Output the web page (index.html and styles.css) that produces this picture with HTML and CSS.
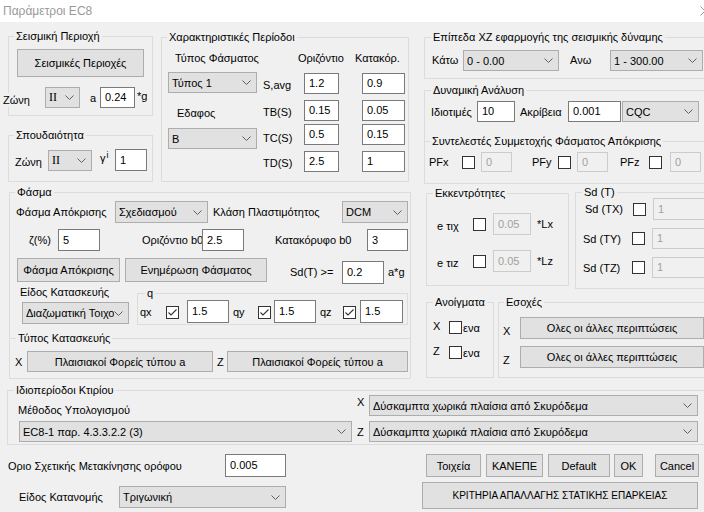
FILE: index.html
```html
<!DOCTYPE html>
<html lang="el">
<head>
<meta charset="utf-8">
<title>Παράμετροι EC8</title>
<link rel="stylesheet" href="styles.css">
</head>
<body>
<div class="win">
  <div class="titlebar">
    <span>Παράμετροι EC8</span>
    <svg class="close" width="10" height="10" viewBox="0 0 10 10"><path d="M0.5 0.5L9.5 9.5M9.5 0.5L0.5 9.5" stroke="#9a9a9a" stroke-width="1" fill="none"/></svg>
  </div>
  <div class="client">
    <div class="top">
      <div class="colL">
        <div class="rowA">
          <div class="stack">
            <div class="grp g-seis">
              <span class="cap">Σεισμική Περιοχή</span>
              <div class="btn seis-btn">Σεισμικές Περιοχές</div>
              <div class="row seis-row">
                <span class="lbl zona-a">Ζώνη</span>
                <div class="cmb zone-cmb serif"><span class="t">II</span><svg width="9" height="5" viewBox="0 0 9 5"><path d="M0.5 0.5L4.5 4.5L8.5 0.5" fill="none" stroke="#606060"/></svg></div>
                <span class="lbl a-lbl">a</span>
                <div class="txt ag-txt">0.24</div>
                <span class="lbl g-lbl">*g</span>
              </div>
            </div>
            <div class="grp g-imp">
              <span class="cap">Σπουδαιότητα</span>
              <div class="row imp-row">
                <span class="lbl zona-b">Ζώνη</span>
                <div class="cmb imp-cmb serif"><span class="t">II</span><svg width="9" height="5" viewBox="0 0 9 5"><path d="M0.5 0.5L4.5 4.5L8.5 0.5" fill="none" stroke="#606060"/></svg></div>
                <span class="lbl gi">γ<span class="sup">i</span></span>
                <div class="txt gi-txt">1</div>
              </div>
            </div>
          </div>
          <div class="grp g-per">
            <span class="cap">Χαρακτηριστικές Περίοδοι</span>
            <div class="per-left">
              <div class="lbl per-h1">Τύπος Φάσματος</div>
              <div class="cmb per-cmb1"><span class="t">Τύπος 1</span><svg width="9" height="5" viewBox="0 0 9 5"><path d="M0.5 0.5L4.5 4.5L8.5 0.5" fill="none" stroke="#606060"/></svg></div>
              <div class="lbl per-h2">Εδαφος</div>
              <div class="cmb per-cmb2"><span class="t">B</span><svg width="9" height="5" viewBox="0 0 9 5"><path d="M0.5 0.5L4.5 4.5L8.5 0.5" fill="none" stroke="#606060"/></svg></div>
            </div>
            <div class="per-right">
              <div class="row per-head"><span class="lbl ph-or">Οριζόντιο</span><span class="lbl ph-kat">Κατακόρ.</span></div>
              <div class="row per-r pr1"><span class="lbl pl">S,avg</span><div class="txt pi1">1.2</div><div class="txt pi2">0.9</div></div>
              <div class="row per-r pr2"><span class="lbl pl">TB(S)</span><div class="txt pi1">0.15</div><div class="txt pi2">0.05</div></div>
              <div class="row per-r pr3"><span class="lbl pl">TC(S)</span><div class="txt pi1">0.5</div><div class="txt pi2">0.15</div></div>
              <div class="row per-r pr4"><span class="lbl pl">TD(S)</span><div class="txt pi1">2.5</div><div class="txt pi2">1</div></div>
            </div>
          </div>
        </div>

        <div class="grp g-fasma">
          <span class="cap">Φάσμα</span>
          <div class="row f-r1">
            <span class="lbl f-l1">Φάσμα Απόκρισης</span>
            <div class="cmb f-c1"><span class="t">Σχεδιασμού</span><svg width="9" height="5" viewBox="0 0 9 5"><path d="M0.5 0.5L4.5 4.5L8.5 0.5" fill="none" stroke="#606060"/></svg></div>
            <span class="lbl f-l2">Κλάση Πλαστιμότητος</span>
            <div class="cmb f-c2"><span class="t">DCM</span><svg width="9" height="5" viewBox="0 0 9 5"><path d="M0.5 0.5L4.5 4.5L8.5 0.5" fill="none" stroke="#606060"/></svg></div>
          </div>
          <div class="row f-r2">
            <span class="lbl f-z">ζ(%)</span>
            <div class="txt f-i1">5</div>
            <span class="lbl f-ob">Οριζόντιο b0</span>
            <div class="txt f-i1">2.5</div>
            <span class="lbl f-kb">Κατακόρυφο b0</span>
            <div class="txt f-i3">3</div>
          </div>
          <div class="row f-r3">
            <div class="btn f-b1">Φάσμα Απόκρισης</div>
            <div class="btn f-b2">Ενημέρωση Φάσματος</div>
            <span class="lbl f-sd">Sd(T) &gt;=</span>
            <div class="txt f-i4">0.2</div>
            <span class="lbl f-ag">a*g</span>
          </div>
          <div class="row f-r4">
            <div class="f-eidos">
              <div class="lbl f-el">Είδος Κατασκευής</div>
              <div class="cmb f-ec"><span class="t">Διαζωματική Τοιχοποιία</span><svg width="9" height="5" viewBox="0 0 9 5"><path d="M0.5 0.5L4.5 4.5L8.5 0.5" fill="none" stroke="#606060"/></svg></div>
            </div>
            <div class="grp g-q">
              <span class="cap q-cap">q</span>
              <div class="row q-row">
                <span class="lbl q-lx">qx</span>
                <span class="chk"><svg width="11" height="11" viewBox="0 0 11 11"><path d="M1.5 5.5L4 8L9.5 2.5" fill="none" stroke="#333" stroke-width="1.1"/></svg></span>
                <div class="txt q-i1">1.5</div>
                <span class="lbl q-ly">qy</span>
                <span class="chk"><svg width="11" height="11" viewBox="0 0 11 11"><path d="M1.5 5.5L4 8L9.5 2.5" fill="none" stroke="#333" stroke-width="1.1"/></svg></span>
                <div class="txt q-i2">1.5</div>
                <span class="lbl q-lz">qz</span>
                <span class="chk"><svg width="11" height="11" viewBox="0 0 11 11"><path d="M1.5 5.5L4 8L9.5 2.5" fill="none" stroke="#333" stroke-width="1.1"/></svg></span>
                <div class="txt q-i3">1.5</div>
              </div>
            </div>
          </div>
          <div class="grp g-tk">
            <span class="cap tk-cap">Τύπος Κατασκευής</span>
            <div class="row tk-row">
              <span class="lbl tk-x">X</span>
              <div class="btn tk-b1">Πλαισιακοί Φορείς τύπου a</div>
              <span class="lbl tk-z">Z</span>
              <div class="btn tk-b2">Πλαισιακοί Φορείς τύπου a</div>
            </div>
          </div>
        </div>
      </div>

      <div class="colR">
        <div class="grp g-epip">
          <span class="cap cap6">Επίπεδα XZ εφαρμογής της σεισμικής δύναμης</span>
          <div class="row ep-row">
            <span class="lbl ep-k">Κάτω</span>
            <div class="cmb ep-c1"><span class="t">0 - 0.00</span><svg width="9" height="5" viewBox="0 0 9 5"><path d="M0.5 0.5L4.5 4.5L8.5 0.5" fill="none" stroke="#606060"/></svg></div>
            <span class="lbl ep-a">Ανω</span>
            <div class="cmb ep-c2"><span class="t">1 - 300.00</span><svg width="9" height="5" viewBox="0 0 9 5"><path d="M0.5 0.5L4.5 4.5L8.5 0.5" fill="none" stroke="#606060"/></svg></div>
          </div>
        </div>
        <div class="grp g-dyn">
          <span class="cap cap6">Δυναμική Ανάλυση</span>
          <div class="row dy-row">
            <span class="lbl dy-l1">Ιδιοτιμές</span>
            <div class="txt dy-i1">10</div>
            <span class="lbl dy-l2">Ακρίβεια</span>
            <div class="txt dy-i2">0.001</div>
            <div class="cmb dy-c"><span class="t">CQC</span><svg width="9" height="5" viewBox="0 0 9 5"><path d="M0.5 0.5L4.5 4.5L8.5 0.5" fill="none" stroke="#606060"/></svg></div>
          </div>
          <div class="grp g-pf">
            <span class="cap cap7">Συντελεστές Συμμετοχής Φάσματος Απόκρισης</span>
            <div class="row pf-row">
              <span class="lbl pf-x">PFx</span>
              <span class="chk"></span>
              <div class="txt dis pf-i1">0</div>
              <span class="lbl pf-y">PFy</span>
              <span class="chk"></span>
              <div class="txt dis pf-i2">0</div>
              <span class="lbl pf-z">PFz</span>
              <span class="chk"></span>
              <div class="txt dis pf-i3">0</div>
            </div>
          </div>
        </div>
        <div class="rowB">
          <div class="grp g-ekk">
            <span class="cap cap8">Εκκεντρότητες</span>
            <div class="row ek-r1">
              <span class="lbl ek-l">e τιχ</span>
              <span class="chk"></span>
              <div class="txt dis ek-i">0.05</div>
              <span class="lbl ek-u">*Lx</span>
            </div>
            <div class="row ek-r2">
              <span class="lbl ek-l">e τιz</span>
              <span class="chk"></span>
              <div class="txt dis ek-i">0.05</div>
              <span class="lbl ek-u">*Lz</span>
            </div>
          </div>
          <div class="grp g-sd">
            <span class="cap cap6">Sd (T)</span>
            <div class="row sd-r1">
              <span class="lbl sd-l1">Sd (TX)</span>
              <span class="chk"></span>
              <div class="txt dis sd-i">1</div>
            </div>
            <div class="row sd-r2">
              <span class="lbl sd-l2">Sd (TY)</span>
              <span class="chk"></span>
              <div class="txt dis sd-i">1</div>
            </div>
            <div class="row sd-r2">
              <span class="lbl sd-l2">Sd (TZ)</span>
              <span class="chk"></span>
              <div class="txt dis sd-i">1</div>
            </div>
          </div>
        </div>
        <div class="rowC">
          <div class="grp g-an">
            <span class="cap cap8">Ανοίγματα</span>
            <div class="row an-r1">
              <span class="lbl an-l">X</span>
              <span class="chk"></span>
              <span class="lbl an-e">ενα</span>
            </div>
            <div class="row an-r2">
              <span class="lbl an-l">Z</span>
              <span class="chk"></span>
              <span class="lbl an-e">ενα</span>
            </div>
          </div>
          <div class="grp g-es">
            <span class="cap cap7">Εσοχές</span>
            <div class="row es-r1">
              <span class="lbl es-l">X</span>
              <div class="btn es-b">Ολες οι άλλες περιπτώσεις</div>
            </div>
            <div class="row es-r2">
              <span class="lbl es-l">Z</span>
              <div class="btn es-b">Ολες οι άλλες περιπτώσεις</div>
            </div>
          </div>
        </div>
      </div>
    </div>

    <div class="grp g-idio">
      <span class="cap cap8">Ιδιοπερίοδοι Κτιρίου</span>
      <div class="id-left">
        <div class="lbl id-l">Μέθοδος Υπολογισμού</div>
        <div class="cmb id-c"><span class="t">EC8-1 παρ. 4.3.3.2.2 (3)</span><svg width="9" height="5" viewBox="0 0 9 5"><path d="M0.5 0.5L4.5 4.5L8.5 0.5" fill="none" stroke="#606060"/></svg></div>
      </div>
      <div class="id-right">
        <div class="row id-rx">
          <span class="lbl id-x">X</span>
          <div class="cmb id-c2"><span class="t">Δύσκαμπτα χωρικά πλαίσια από Σκυρόδεμα</span><svg width="9" height="5" viewBox="0 0 9 5"><path d="M0.5 0.5L4.5 4.5L8.5 0.5" fill="none" stroke="#606060"/></svg></div>
        </div>
        <div class="row id-rz">
          <span class="lbl id-z">Z</span>
          <div class="cmb id-c2"><span class="t">Δύσκαμπτα χωρικά πλαίσια από Σκυρόδεμα</span><svg width="9" height="5" viewBox="0 0 9 5"><path d="M0.5 0.5L4.5 4.5L8.5 0.5" fill="none" stroke="#606060"/></svg></div>
        </div>
      </div>
    </div>

    <div class="bottom">
      <div class="bt-left">
        <div class="row bt-r1">
          <span class="lbl bt-l1">Οριο Σχετικής Μετακίνησης ορόφου</span>
          <div class="txt bt-i">0.005</div>
        </div>
        <div class="row bt-r2">
          <span class="lbl bt-l2">Είδος Κατανομής</span>
          <div class="cmb bt-c"><span class="t">Τριγωνική</span><svg width="9" height="5" viewBox="0 0 9 5"><path d="M0.5 0.5L4.5 4.5L8.5 0.5" fill="none" stroke="#606060"/></svg></div>
        </div>
      </div>
      <div class="bt-right">
        <div class="row bt-btns">
          <div class="btn b-toix">Τοιχεία</div>
          <div class="btn b-kan">ΚΑΝΕΠΕ</div>
          <div class="btn b-def">Default</div>
          <div class="btn b-ok">OK</div>
          <div class="btn b-can">Cancel</div>
        </div>
        <div class="btn b-krit">ΚΡΙΤΗΡΙΑ ΑΠΑΛΛΑΓΗΣ ΣΤΑΤΙΚΗΣ ΕΠΑΡΚΕΙΑΣ</div>
      </div>
    </div>
  </div>
</div>
</body>
</html>
```
FILE: styles.css
```css
* { box-sizing: border-box; margin: 0; padding: 0; }
html, body { width: 704px; height: 512px; overflow: hidden; background: #f0f0f0; }
body { font-family: "Liberation Sans", Arial, sans-serif; font-size: 11px; color: #000; }

.win { width: 704px; height: 512px; overflow: hidden; }
.titlebar { height: 22px; background: #fff; display: flex; align-items: center; justify-content: space-between; padding-left: 3px; color: #999; font-size: 12px; }
.titlebar .close { margin-right: -6px; flex: none; }
.client { width: 720px; }

.top { display: flex; align-items: flex-start; }
.colL { width: 416px; flex: none; }
.colR { width: 296px; margin-left: 8px; flex: none; }
.rowA, .rowB, .rowC { display: flex; align-items: flex-start; }
.row { display: flex; align-items: center; }

.grp { position: relative; border: 1px solid #dcdcdc; flex: none; }
.cap { position: absolute; top: -8px; left: 5px; padding: 0 2px; background: #f0f0f0; line-height: 14px; white-space: nowrap; }
.cap6 { left: 6px; }
.cap7 { left: 5px; }
.cap8 { left: 6px; }

.lbl { flex: none; white-space: nowrap; line-height: 14px; }
.btn { flex: none; background: #e1e1e1; border: 1px solid #adadad; display: flex; align-items: center; justify-content: center; white-space: nowrap; }
.cmb { flex: none; background: #e1e1e1; border: 1px solid #adadad; display: flex; align-items: center; padding-left: 3px; white-space: nowrap; overflow: hidden; }
.cmb .t { flex: 1; overflow: hidden; min-width: 0; }
.cmb svg { flex: none; margin: 0 5px 0 3px; }
.serif .t { font-family: "Liberation Serif", "Times New Roman", serif; font-size: 12px; }
.txt { flex: none; background: #fff; border: 1px solid #7a7a7a; padding: 0 0 1px 4px; display: flex; align-items: center; white-space: nowrap; overflow: hidden; }
.txt.dis { background: #f0f0f0; border-color: #cccccc; color: #a0a0a0; }
.chk { flex: none; width: 13px; height: 13px; border: 1px solid #333; background: #fff; display: flex; align-items: center; justify-content: center; }

/* Σεισμική Περιοχή */
.stack { width: 145px; margin-left: 8px; flex: none; }
.g-seis { margin-top: 14px; width: 145px; height: 80px; }
.seis-btn { margin: 12px 0 0 8px; width: 127px; height: 28px; }
.seis-row { margin-top: 10px; height: 21px; }
.zona-a { margin-left: -6px; width: 42px; margin-top: 5px; }
.zona-a { background: #f0f0f0; }
.zone-cmb { width: 35px; height: 21px; }
.a-lbl { margin-left: 10px; width: 10px; }
.ag-txt { width: 35px; height: 21px; }
.g-lbl { margin-left: 2px; margin-top: -3px; }

/* Σπουδαιότητα */
.g-imp { margin-top: 19px; width: 145px; height: 47px; }
.imp-row { margin-top: 13px; height: 22px; }
.zona-b { margin-left: 6px; width: 33px; margin-top: 3px; }
.imp-cmb { width: 44px; height: 21px; }
.gi { margin-left: 8px; width: 15px; align-self: flex-start; margin-top: 2px; }
.gi .sup { font-size: 9px; position: relative; top: -4px; margin-left: 1px; }
.gi-txt { width: 32px; height: 22px; }

/* Χαρακτηριστικές Περίοδοι */
.g-per { margin: 15px 0 0 8px; width: 248px; height: 145px; display: flex; align-items: flex-start; }
.per-left { margin-left: 6px; width: 89px; flex: none; }
.per-h1 { margin-top: 13px; height: 14px; padding-left: 7px; }
.per-cmb1 { margin-top: 7px; width: 89px; height: 21px; }
.per-h2 { margin-top: 13px; height: 14px; padding-left: 9px; }
.per-cmb2 { margin-top: 8px; width: 89px; height: 21px; }
.per-right { margin-left: 6px; width: 142px; flex: none; }
.per-head { margin-top: 13px; height: 14px; }
.ph-or { margin-left: 35px; width: 57px; }
.per-r { height: 21px; }
.pr1 { margin-top: 8px; }
.pr2 { margin-top: 6px; }
.pr3 { margin-top: 3px; }
.pr4 { margin-top: 6px; }
.pl { width: 41px; }
.pr1 .pl { margin-top: 3px; }
.pr2 .pl { margin-top: 3px; }
.pr3 .pl { margin-top: 6px; }
.pr4 .pl { margin-top: 2px; }
.pi1 { width: 35px; height: 21px; }
.pi2 { margin-left: 23px; width: 43px; height: 21px; }

/* Φάσμα */
.g-fasma { margin: 10px 0 0 9px; width: 402px; height: 187px; }
.f-r1 { margin-top: 8px; height: 22px; }
.f-l1 { margin-left: 6px; width: 99px; }
.f-c1 { width: 93px; height: 22px; }
.f-l2 { margin-left: 5px; width: 129px; }
.f-c2 { width: 66px; height: 22px; }
.f-r2 { margin-top: 6px; height: 22px; }
.f-z { margin-left: 19px; width: 29px; }
.f-i1 { width: 42px; height: 22px; }
.f-ob { margin-left: 42px; width: 60px; }
.f-kb { margin-left: 31px; width: 92px; }
.f-i3 { width: 41px; height: 22px; }
.f-r3 { margin-top: 7px; height: 27px; align-items: flex-start; }
.f-b1 { margin-left: 7px; width: 103px; height: 24px; }
.f-b2 { margin-left: 5px; width: 142px; height: 24px; }
.f-sd { margin: 3px 0 0 23px; width: 52px; line-height: 23px; }
.f-i4 { margin-top: 3px; width: 42px; height: 23px; }
.f-ag { margin: 3px 0 0 4px; line-height: 23px; }
.f-r4 { align-items: flex-start; }
.f-eidos { width: 127px; flex: none; }
.f-el { margin-left: 10px; height: 14px; }
.f-ec { margin: 3px 0 0 12px; width: 107px; height: 22px; }
.f-ec .t { margin-right: -3px; }
.g-q { margin-top: 8px; width: 271px; height: 32px; }
.q-cap { left: 7px; }
.q-row { margin-top: 6px; height: 23px; }
.q-lx { margin-left: 2px; width: 26px; }
.q-i1 { margin-left: 8px; width: 42px; height: 23px; }
.q-ly { margin-left: 4px; width: 25px; }
.q-i2 { margin-left: 3px; width: 42px; height: 23px; }
.q-lz { margin-left: 4px; width: 23px; }
.q-i3 { margin-left: 4px; width: 43px; height: 23px; }
.g-q .chk { margin-top: 1px; }
.g-tk { margin: 13px 0 0 -1px; width: 402px; height: 41px; }
.tk-cap { left: 6px; }
.tk-row { margin-top: 12px; height: 21px; }
.tk-x { margin-left: 5px; width: 12px; }
.tk-b1 { width: 186px; height: 21px; }
.tk-z { margin-left: 4px; width: 10px; }
.tk-b2 { width: 181px; height: 21px; }

/* Επίπεδα */
.g-epip { margin-top: 15px; width: 296px; height: 42px; }
.ep-row { margin-top: 12px; height: 21px; }
.ep-k { margin-left: 7px; width: 31px; margin-top: -2px; }
.ep-c1 { width: 96px; height: 21px; }
.ep-a { margin-left: 11px; width: 40px; margin-top: -2px; }
.ep-c2 { width: 93px; height: 21px; }

/* Δυναμική */
.g-dyn { margin-top: 11px; width: 296px; height: 94px; }
.dy-row { margin-top: 10px; height: 21px; }
.dy-l1 { margin-left: 6px; width: 46px; }
.dy-i1 { width: 38px; height: 21px; }
.dy-l2 { margin-left: 5px; width: 48px; }
.dy-i2 { width: 53px; height: 21px; }
.dy-c { margin-left: 1px; width: 77px; height: 21px; }
.g-pf { margin: 19px 0 0 -1px; width: 297px; height: 43px; }
.pf-row { margin-top: 10px; height: 20px; }
.pf-x { margin-left: 4px; width: 33px; }
.pf-i1 { margin-left: 6px; width: 31px; height: 20px; }
.pf-y { margin-left: 20px; width: 26px; }
.pf-i2 { margin-left: 6px; width: 31px; height: 20px; }
.pf-z { margin-left: 12px; width: 29px; }
.pf-i3 { margin-left: 8px; width: 31px; height: 20px; }

/* Εκκεντρότητες */
.g-ekk { margin: 9px 0 0 2px; width: 143px; height: 93px; }
.ek-r1 { margin-top: 19px; height: 22px; }
.ek-r2 { margin-top: 15px; height: 22px; }
.ek-l { margin-left: 10px; width: 36px; margin-top: 4px; }
.ek-i { margin-left: 7px; width: 38px; height: 22px; }
.ek-u { margin-left: 6px; }

/* Sd (T) */
.g-sd { margin: 8px 0 0 6px; width: 145px; height: 97px; }
.sd-r1 { margin-top: 5px; height: 22px; }
.sd-r2 { margin-top: 8px; height: 21px; }
.sd-l1 { margin-left: 9px; width: 48px; }
.sd-l2 { margin-left: 7px; width: 49px; }
.sd-i { margin-left: 7px; width: 70px; height: 100%; }

/* Ανοίγματα / Εσοχές */
.rowC { margin-top: 13px; }
.g-an { margin-left: 2px; width: 68px; height: 76px; }
.an-r1 { margin-top: 18px; height: 13px; }
.an-r2 { margin-top: 12px; height: 13px; }
.an-l { margin-left: 6px; width: 16px; margin-top: -3px; }
.an-e { margin-left: 1px; }
.g-es { margin-left: 4px; width: 222px; height: 76px; }
.es-r1 { margin-top: 14px; height: 22px; }
.es-r2 { margin-top: 7px; height: 22px; }
.es-l { margin-left: 4px; width: 17px; margin-top: 5px; }
.es-b { width: 184px; height: 22px; }

/* Ιδιοπερίοδοι */
.g-idio { margin: 11px 0 0 7px; width: 713px; height: 55px; display: flex; align-items: flex-start; }
.id-left { width: 344px; flex: none; }
.id-l { margin: 12px 0 0 10px; height: 14px; }
.id-c { margin: 4px 0 0 11px; width: 333px; height: 21px; }
.id-right { margin-left: 5px; flex: none; }
.id-rx { margin-top: 4px; height: 21px; }
.id-rz { margin-top: 5px; height: 21px; }
.id-x { width: 12px; align-self: flex-start; }
.id-z { width: 12px; }
.id-c2 { width: 329px; height: 21px; }

/* Bottom */
.bottom { margin-top: 9px; display: flex; align-items: flex-start; }
.bt-left { width: 416px; flex: none; }
.bt-r1 { height: 23px; }
.bt-l1 { margin-left: 8px; width: 217px; }
.bt-i { width: 61px; height: 23px; }
.bt-r2 { margin-top: 9px; height: 22px; }
.bt-l2 { margin-left: 19px; width: 100px; }
.bt-c { width: 167px; height: 22px; }
.bt-right { margin-left: 6px; flex: none; }
.bt-btns { margin-left: 4px; height: 23px; }
.bt-btns .btn { height: 23px; }
.b-toix { width: 55px; }
.b-kan { margin-left: 5px; width: 57px; }
.b-def { margin-left: 5px; width: 62px; }
.b-ok { margin-left: 4px; width: 29px; }
.b-can { margin-left: 12px; width: 44px; }
.b-krit { margin-top: 5px; width: 276px; height: 27px; font-size: 10px; }
```
